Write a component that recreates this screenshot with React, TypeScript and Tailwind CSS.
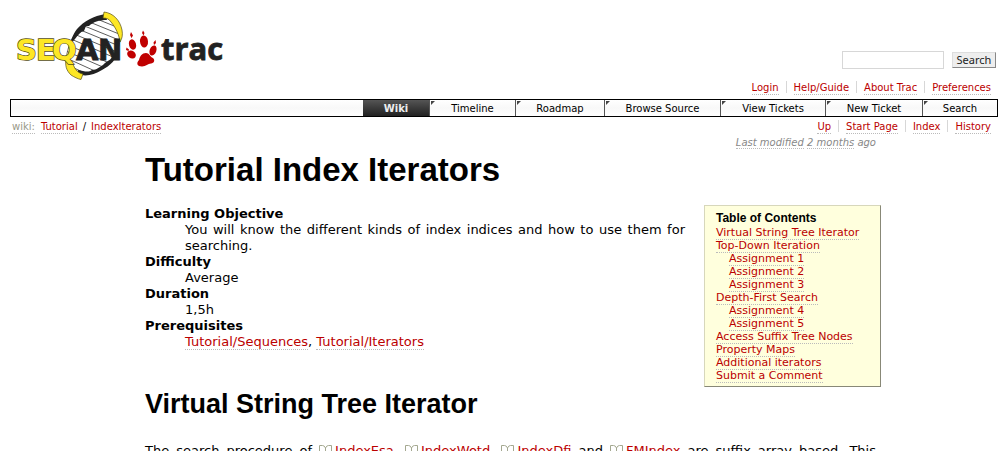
import React from 'react';

const link = 'text-[#b00] border-b border-dotted border-[#bbb]';

const tabs = [
  { label: 'Timeline', width: 'w-[86px]' },
  { label: 'Roadmap', width: 'w-[89px]' },
  { label: 'Browse Source', width: 'w-[116px]' },
  { label: 'View Tickets', width: 'w-[105px]' },
  { label: 'New Ticket', width: 'w-[97px]' },
  { label: 'Search', width: 'w-[75px]' },
];

const toc = [
  { label: 'Virtual String Tree Iterator', sub: false },
  { label: 'Top-Down Iteration', sub: false },
  { label: 'Assignment 1', sub: true },
  { label: 'Assignment 2', sub: true },
  { label: 'Assignment 3', sub: true },
  { label: 'Depth-First Search', sub: false },
  { label: 'Assignment 4', sub: true },
  { label: 'Assignment 5', sub: true },
  { label: 'Access Suffix Tree Nodes', sub: false },
  { label: 'Property Maps', sub: false },
  { label: 'Additional iterators', sub: false },
  { label: 'Submit a Comment', sub: false },
];

function Logo() {
  return (
    <svg width="216" height="76" viewBox="10 5 216 76" role="img" aria-label="SeqAn Trac">
      <defs>
        <clipPath id="helix">
          <path d="M66 60C67 46 75 29 86 23C93 19 100 17 106 17C114 22 121 32 120 40C119 52 112 61 104 67C97 72 88 74 82 73C75 71 69 67 66 60Z" />
        </clipPath>
      </defs>
      <path d="M66 60C67 46 75 29 86 23C93 19 100 17 106 17C114 22 121 32 120 40C119 52 112 61 104 67C97 72 88 74 82 73C75 71 69 67 66 60Z" fill="#fff" stroke="#444" strokeWidth=".7" />
      <g clipPath="url(#helix)" stroke="#333" strokeWidth=".8">
        <path d="M92 17L124 30M87 21L124 36M82 25L124 42M78 29L124 48M74 34L122 54M71 39L120 60M68 45L116 66M66 51L112 71M64 57L106 76M63 63L98 79" />
      </g>
      <path d="M105 14L107 20C99 20 93 22 89 26L86 26L84 31C80 32 78 35 75 39C71 43 69 47 68 50C70 42 73 34 77 29C84 21 94 16 105 14Z" fill="#222" />
      <path d="M78 70C84 71 88 73 92 70C97 70 99 67 103 65C106 61 110 61 112 57L119 50C117 59 110 66 102 70C94 75 85 77 78 74Z" fill="#222" />
      <path d="M104 12C113 13 120 20 122 30C123 35 122 39 120 42C119 35 116 28 111 22C109 19 107 18 103 18Z" fill="#fde725" stroke="#554d16" strokeWidth=".7" />
      <path d="M66 57C65 66 66 70 71 75C74 77 78 79 81 79.500L83 74C77 73 74 68 72 61Z" fill="#fde725" stroke="#554d16" strokeWidth=".7" />
      <text x="16 36 52" y="60" fontFamily="DejaVu Sans, sans-serif" fontWeight="700" fontSize="29" fill="#fde725" stroke="#554d16" strokeWidth="1.400" paintOrder="stroke">SEQ</text>
      <text x="76 98" y="60" fontFamily="DejaVu Sans, sans-serif" fontWeight="700" fontSize="29" fill="#222" stroke="#222" strokeWidth=".8">AN</text>
      <g fill="#c00000">
        <ellipse cx="132.500" cy="44.500" rx="3.500" ry="5.300" transform="rotate(-15 132.500 44.500)" />
        <ellipse cx="144" cy="41.500" rx="4" ry="6" transform="rotate(-5 144 41.500)" />
        <ellipse cx="131.500" cy="54.500" rx="4.600" ry="3.800" transform="rotate(35 131.500 54.500)" />
        <ellipse cx="153" cy="50.500" rx="3.300" ry="5.300" transform="rotate(20 153 50.500)" />
        <path d="M139 60C140 56 142 53 146 53C149 53 150 56 152 57.500C156 59.500 154 63.500 151 63.500C148 63.500 146 66.500 142 66.500C137 66.500 136 63 139 60Z" />
        <path d="M131 32L133 35.500L131.500 38L130 35ZM143 30.500L144.500 33L143.500 35.500L142 33ZM155.500 40L156 43L154 45L153.500 42.500ZM126.500 47.500L129 49.500L128.500 51L126 50Z" />
      </g>
      <text x="161" y="60" fontFamily="Open Sans, sans-serif" fontWeight="700" fontSize="31" fill="#222" stroke="#222" strokeWidth=".8">trac</text>
    </svg>
  );
}

function Book() {
  return (
    <svg className="mr-[3px] inline-block align-baseline" width="13" height="10" viewBox="0 0 13 10" fill="none" stroke="#a4a890" aria-hidden="true">
      <path d="M6.500 9V3Q5.500 .5 3.500 .5H.5V8H3.500Q5.500 8 6.500 9Q7.500 8 9.500 8H12.500V.5H9.500Q7.500 .5 6.500 3" />
    </svg>
  );
}

function LinkBar({ items }: { items: string[] }) {
  return (
    <ul className="flex">
      {items.map((item, i) => (
        <li key={item} className="flex items-start">
          <a href="#" className={link}>{item}</a>
          {i < items.length - 1 && <span className="mx-[7px] h-3 w-px bg-[#d7d7d7]" />}
        </li>
      ))}
    </ul>
  );
}

export default function App() {
  return (
    <div className="h-screen overflow-hidden bg-white px-[10px] font-['DejaVu_Sans',sans-serif] text-[13px] leading-4 text-black">
      <header className="flex items-start justify-between pt-[5px]">
        <a href="#"><Logo /></a>
        <form className="flex items-center gap-2 pt-[46px] pr-[2px]" onSubmit={(e) => e.preventDefault()}>
          <input type="text" aria-label="Search" className="h-[18px] w-[102px] border border-[#d7d7d7]" />
          <button className="h-4 w-11 border border-[#ddd] border-r-[#888] border-b-[#888] bg-[#eee] font-['Noto_Sans',sans-serif] text-[11px] leading-3 text-[#222]">Search</button>
        </form>
      </header>
      <div className="flex h-[18px] justify-end pr-[7px] text-[10px] leading-[13px]">
        <LinkBar items={['Login', 'Help/Guide', 'About Trac', 'Preferences']} />
      </div>
      <nav className="flex h-[18px] justify-end border border-black bg-linear-to-b from-white via-[#f8f8f8] to-white text-[10px] leading-[18px]">
        <a href="#" className="w-[66px] bg-linear-to-b from-[#555] to-[#222] text-center font-bold text-[#eee]">Wiki</a>
        {tabs.map((t) => (
          <a key={t.label} href="#" className={`${t.width} relative border-l border-[#555] text-center`}>
            <svg className="absolute top-[1px] left-[1px]" width="4" height="4" viewBox="0 0 4 4"><path d="M0 0H4L0 4Z" fill="#444" /></svg>
            {t.label}
          </a>
        ))}
      </nav>
      <div className="flex justify-between pt-[3px] pr-[7px] pl-[2px] text-[10px] leading-[13px]">
        <div className="flex gap-[6px]">
          <a href="#" className="border-b border-dotted border-[#bbb] text-[#999988]">wiki:</a>
          <span className="flex gap-[5px]"><a href="#" className={link}>Tutorial</a><span>/</span><a href="#" className={link}>IndexIterators</a></span>
        </div>
        <LinkBar items={['Up', 'Start Page', 'Index', 'History']} />
      </div>
      <p className="pt-[2px] pr-[122px] text-right text-[10px] leading-[13px] text-[#888] italic"><a href="#" className="border-b border-dotted border-[#bbb]">Last modified</a>{' '}<a href="#" className="border-b border-dotted border-[#bbb]">2 months</a> ago</p>
      <main className="pt-px pr-[122px] pl-[135px]">
        <h1 className="font-['Liberation_Sans',sans-serif] text-[33px] leading-10 font-bold">Tutorial Index Iterators</h1>
        <div className="flex items-start justify-between gap-[19px] pt-[15px]">
          <dl className="flex-1 pt-px text-justify">
            <dt className="font-bold">Learning Objective</dt>
            <dd className="pl-10">You will know the different kinds of index indices and how to use them for searching.</dd>
            <dt className="font-bold">Difficulty</dt>
            <dd className="pl-10">Average</dd>
            <dt className="font-bold">Duration</dt>
            <dd className="pl-10">1,5h</dd>
            <dt className="font-bold">Prerequisites</dt>
            <dd className="pl-10"><a href="#" className={link}>Tutorial/Sequences</a>, <a href="#" className={link}>Tutorial/Iterators</a></dd>
          </dl>
          <aside className="-mr-[5px] w-[177px] border border-[#d7d7bb] border-r-[#888877] border-b-[#888877] bg-[#ffffdd] px-[11px] pt-[5px] pb-[4px] text-[11px] leading-[13px] whitespace-nowrap">
            <h2 className="font-['Liberation_Sans',sans-serif] text-[12px] leading-[15px] font-bold">Table of Contents</h2>
            <ol>
              {toc.map((t) => <li key={t.label} className={t.sub ? 'pl-[13px]' : ''}><a href="#" className={link}>{t.label}</a></li>)}
            </ol>
          </aside>
        </div>
        <h2 className="font-['Liberation_Sans',sans-serif] text-[27px] leading-[34px] font-bold">Virtual String Tree Iterator</h2>
        <p className="pt-[22px] text-justify [text-align-last:justify]">The search procedure of <a href="#" className={link}><Book />IndexEsa</a>, <a href="#" className={link}><Book />IndexWotd</a>, <a href="#" className={link}><Book />IndexDfi</a> and <a href="#" className={link}><Book />FMIndex</a> are suffix array based. This</p>
      </main>
    </div>
  );
}
